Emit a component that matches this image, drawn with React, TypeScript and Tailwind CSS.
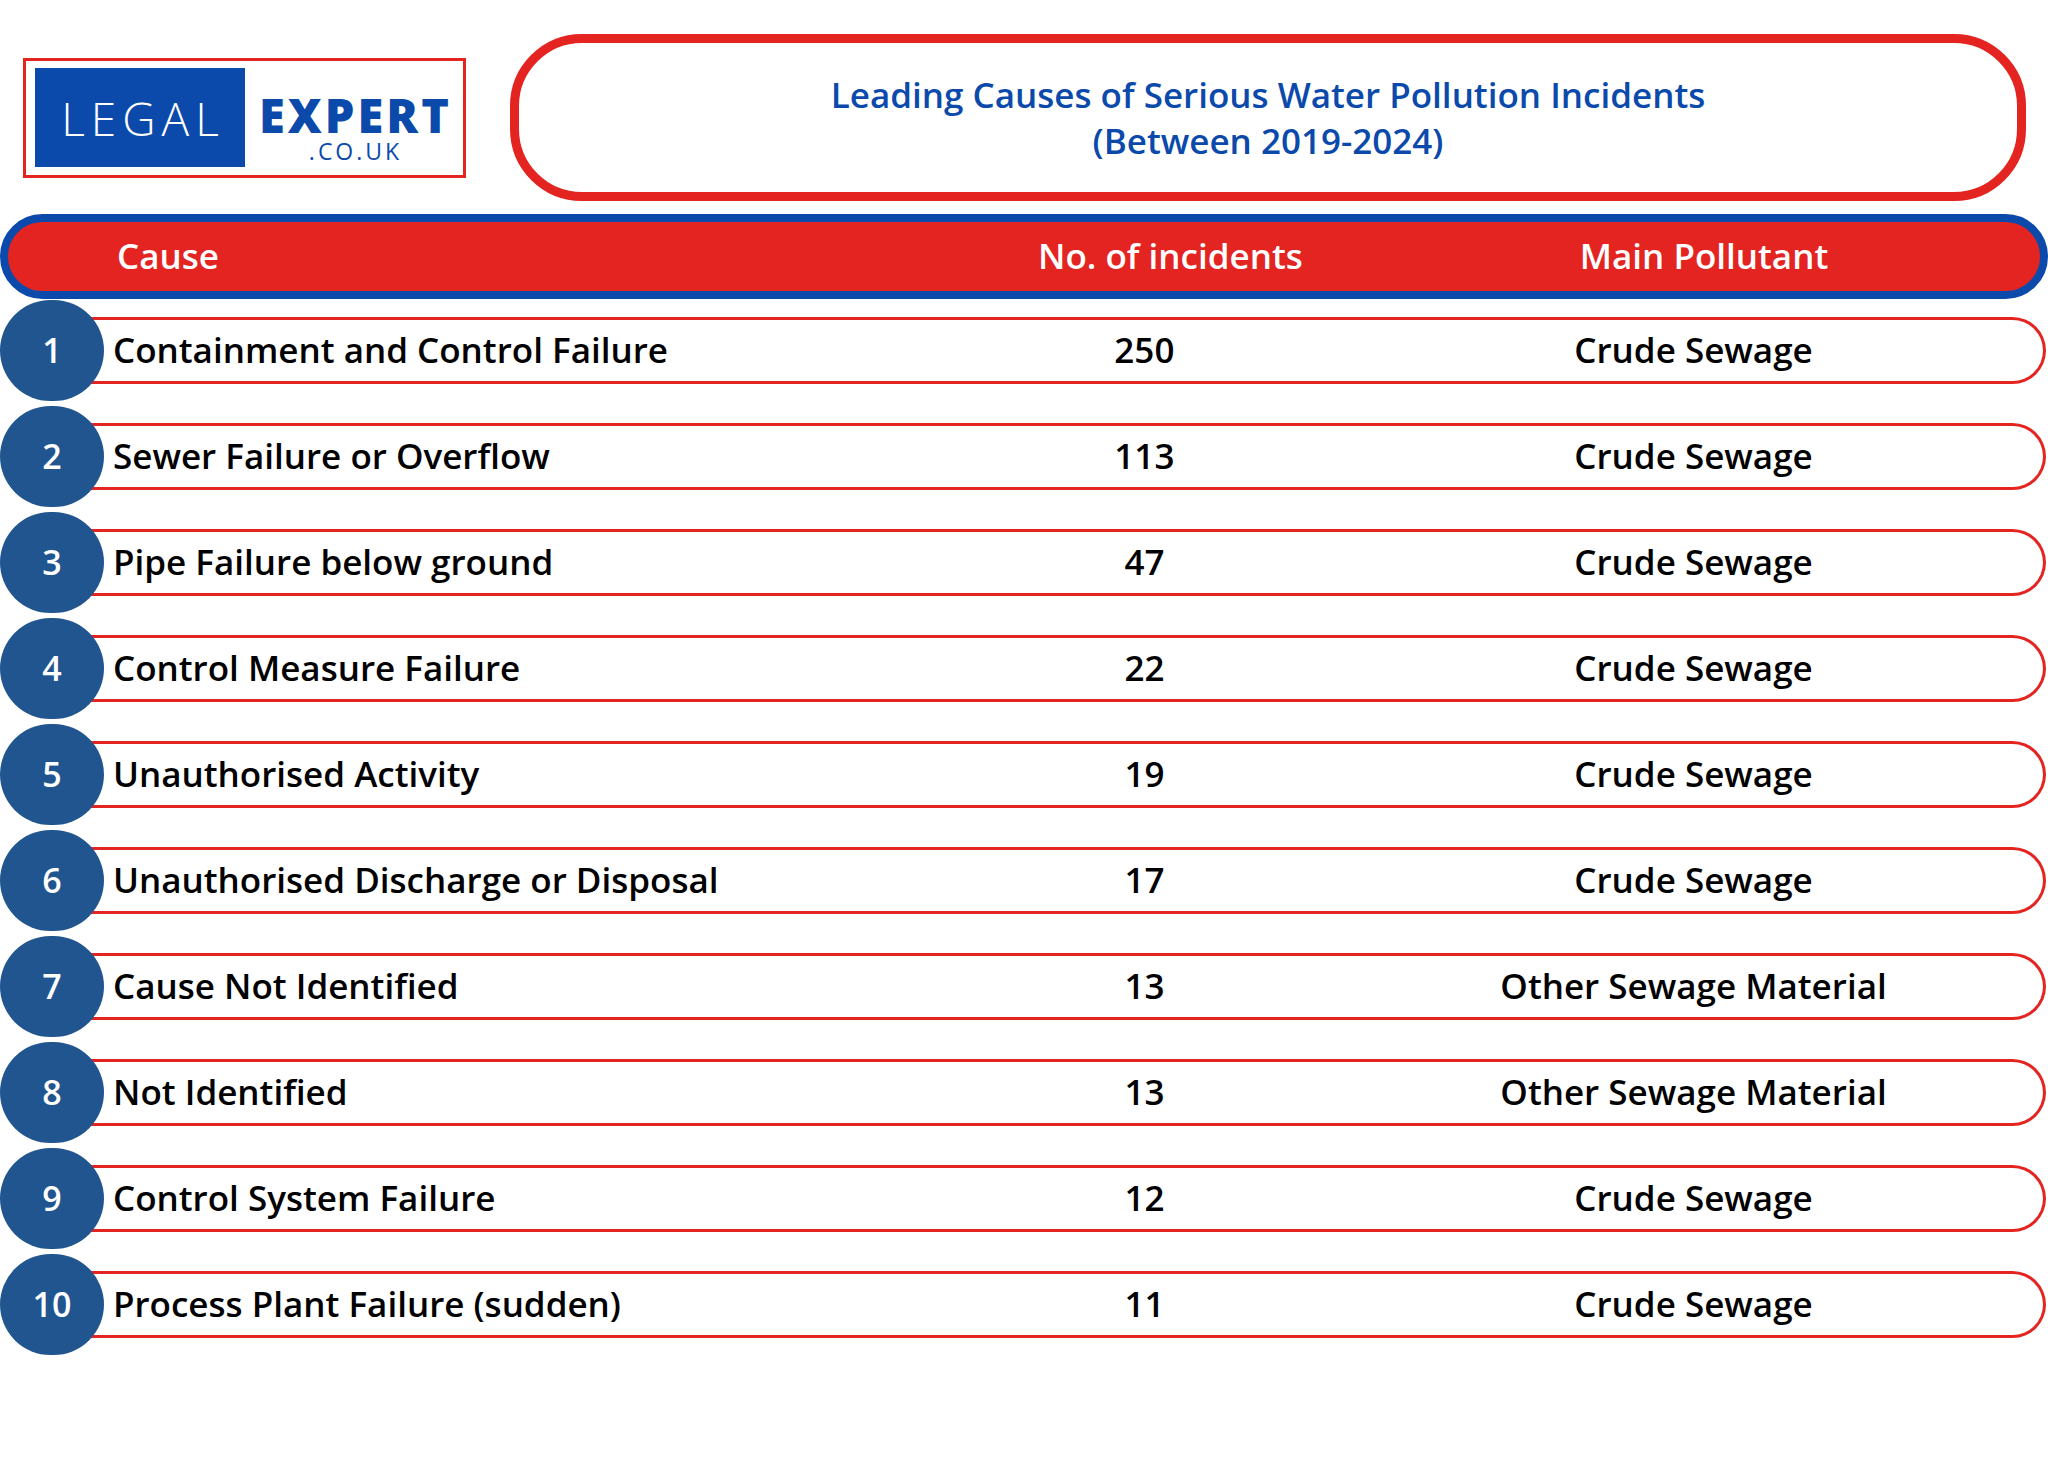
import React from 'react';

interface Row {
  cause: string;
  count: number;
  pollutant: string;
}

const rows: Row[] = [
  { cause: 'Containment and Control Failure', count: 250, pollutant: 'Crude Sewage' },
  { cause: 'Sewer Failure or Overflow', count: 113, pollutant: 'Crude Sewage' },
  { cause: 'Pipe Failure below ground', count: 47, pollutant: 'Crude Sewage' },
  { cause: 'Control Measure Failure', count: 22, pollutant: 'Crude Sewage' },
  { cause: 'Unauthorised Activity', count: 19, pollutant: 'Crude Sewage' },
  { cause: 'Unauthorised Discharge or Disposal', count: 17, pollutant: 'Crude Sewage' },
  { cause: 'Cause Not Identified', count: 13, pollutant: 'Other Sewage Material' },
  { cause: 'Not Identified', count: 13, pollutant: 'Other Sewage Material' },
  { cause: 'Control System Failure', count: 12, pollutant: 'Crude Sewage' },
  { cause: 'Process Plant Failure (sudden)', count: 11, pollutant: 'Crude Sewage' },
];

function Logo() {
  return (
    <div className="w-[443px] h-[120px] shrink-0 border-[3px] border-[#e42421] bg-white flex items-center pl-[9px]">
      <div className="w-[210px] h-[99px] bg-[#0b4aab] flex items-center justify-center">
        <span className="text-white text-[46px] leading-none font-light tracking-[6px] pl-[6px] font-['Open_Sans',sans-serif]">
          LEGAL
        </span>
      </div>
      <div className="flex-1 flex flex-col items-center pt-[22px]">
        <div className="h-[40px] overflow-visible text-[#0b4aab] text-[47px] leading-[40px] font-extrabold tracking-[3px] pl-[3px] font-['Open_Sans',sans-serif]">
          EXPERT
        </div>
        <div className="mt-[5px] h-[22px] overflow-visible text-[#0b4aab] text-[23px] leading-[22px] tracking-[3px] pl-[3px] font-['Open_Sans',sans-serif]">
          .CO.UK
        </div>
      </div>
    </div>
  );
}

export default function App() {
  return (
    <div className="w-[2048px] h-[1457px] bg-white overflow-hidden font-['Open_Sans',sans-serif]">
      <div className="flex items-center pt-[34px] pl-[23px] pr-[22px] gap-[44px]">
        <Logo />
        <div className="flex-1 h-[167px] border-[9px] border-[#e42421] rounded-[72px] flex flex-col items-center justify-center">
          <p className="text-[#0b4aab] text-[35px] leading-[46px] font-semibold text-center">
            Leading Causes of Serious Water Pollution Incidents
          </p>
          <p className="text-[#0b4aab] text-[35px] leading-[46px] font-semibold text-center">
            (Between 2019-2024)
          </p>
        </div>
      </div>

      <div className="mt-[13px] h-[85px] border-[8px] border-[#0b4aab] rounded-full bg-[#e42421] flex items-center text-white text-[35px] font-semibold">
        <div className="pl-[109px] w-[1030px]">Cause</div>
        <div className="w-[262px] text-center whitespace-nowrap">No. of incidents</div>
        <div className="ml-[104px] w-[600px] text-center">Main Pollutant</div>
      </div>

      <div className="mt-[1px] flex flex-col gap-[5px]">
        {rows.map((row, i) => (
          <div key={i} className="flex items-center h-[101px]">
            <div className="relative z-10 w-[104px] h-[101px] shrink-0 rounded-full bg-[#21558f] flex items-center justify-center text-white text-[34px] font-semibold">
              {i + 1}
            </div>
            <div className="-ml-[54px] w-[1996px] h-[67px] border-y-[3.5px] border-r-[3.5px] border-[#e42421] rounded-r-full flex items-center text-black text-[35px] font-semibold">
              <div className="pl-[63px] w-[896px] whitespace-nowrap">{row.cause}</div>
              <div className="w-[400px] text-center">{row.count}</div>
              <div className="w-[700px] text-center whitespace-nowrap">{row.pollutant}</div>
            </div>
          </div>
        ))}
      </div>
    </div>
  );
}
